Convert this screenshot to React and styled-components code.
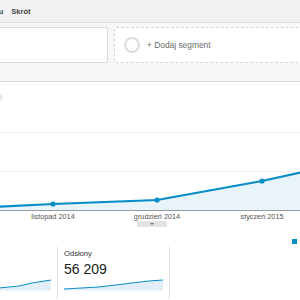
import React from 'react';
import styled, { createGlobalStyle } from 'styled-components';

const GlobalStyle = createGlobalStyle`
  html, body {
    margin: 0;
    padding: 0;
  }
  body {
    width: 300px;
    height: 300px;
    overflow: hidden;
    background: #fff;
    font-family: "Liberation Sans", Arial, sans-serif;
  }
`;

const TopBar = styled.div`
  height: 22px;
  background: #f2f2f2;
  border-bottom: 1px solid #dcdcdc;
  display: flex;
  align-items: center;
  gap: 8px;
  margin-left: -55px;
  white-space: nowrap;
`;

const NavItem = styled.span`
  font-size: 7.5px;
  font-weight: bold;
  color: #444;
`;

const SegmentArea = styled.div`
  height: 59px;
  box-sizing: border-box;
  padding-top: 4px;
  background: #f7f7f7;
  border-bottom: 1px solid #dcdcdc;
  overflow: hidden;
`;

const SegmentRow = styled.div`
  display: flex;
  gap: 6px;
  margin-left: -100px;
  margin-right: -20px;
`;

const SegmentBox = styled.div`
  flex: ${(p) => (p.$grow ? '1 1 auto' : '0 0 208px')};
  height: 36px;
  box-sizing: border-box;
  background: #fff;
  border: 1px ${(p) => (p.$dashed ? 'dashed #d4d4d4' : 'solid #dadada')};
  border-radius: 2px;
  display: flex;
  align-items: center;
  gap: 7px;
  padding-left: 9px;
`;

const Ring = styled.div`
  width: 16px;
  height: 16px;
  box-sizing: border-box;
  border: 2px solid #dcdcdc;
  border-radius: 50%;
`;

const AddText = styled.span`
  font-size: 8.4px;
  color: #6a6a6a;
`;

const ChartSection = styled.div`
  display: flex;
  flex-direction: column;
`;

const ChartToolbar = styled.div`
  height: 17px;
  display: flex;
  align-items: flex-end;
`;

const Toggle = styled.div`
  width: 6px;
  height: 7px;
  margin-left: -3px;
  margin-bottom: -2px;
  border-radius: 50%;
  background: #e3eaed;
`;

const ChartSvg = styled.svg`
  display: block;
  width: 300px;
  height: 122px;
`;

const DrawerRow = styled.div`
  height: 6px;
  display: flex;
  justify-content: center;
  padding-left: 4px;
`;

const DrawerTab = styled.div`
  width: 30px;
  height: 6px;
  background: #e2e2e2;
  display: flex;
  align-items: center;
  justify-content: center;

  &::after {
    content: '';
    border-left: 2px solid transparent;
    border-right: 2px solid transparent;
    border-top: 2px solid #777;
  }
`;

const LegendRow = styled.div`
  height: 20px;
  box-sizing: border-box;
  padding-top: 12px;
  padding-left: 292px;
  display: flex;
`;

const LegendSwatch = styled.div`
  width: 5px;
  height: 5px;
  flex: 0 0 5px;
  background: #058dc7;
`;

const CardsRow = styled.div`
  display: flex;
  margin-left: -54px;
`;

const Card = styled.div`
  width: 112px;
  flex: 0 0 112px;
  height: 52px;
  box-sizing: border-box;
  padding: 2px 4px 0 6px;
  border-right: 1px solid #dcdcdc;
`;

const CardLabel = styled.div`
  height: 9px;
  font-size: 7.6px;
  line-height: 9px;
  color: #333;
`;

const CardValue = styled.div`
  height: 14px;
  font-size: 14px;
  line-height: 14px;
  margin-top: 4px;
  color: #222;
`;

const Spark = styled.svg`
  display: block;
  width: 100px;
  height: 15px;
`;

const BLUE = '#058dc7';

const mainPoints = [
  [-52, 110],
  [53, 105],
  [157, 101],
  [262, 82],
  [352, 62],
];

const axisLabels = [
  { x: 53, text: 'listopad 2014' },
  { x: 157, text: 'grudzień 2014' },
  { x: 262, text: 'styczeń 2015' },
];

// first card sits mostly off the left edge, only its sparkline shows
const cards = [
  {
    id: 'sesje',
    points: [[0, 14], [20, 13.5], [47, 12], [67, 10], [80, 7], [99, 4]],
  },
  {
    id: 'odslony',
    label: 'Odsłony',
    value: '56 209',
    points: [[0, 13], [35, 11], [68, 7], [85, 5], [99, 4]],
  },
];

const toPath = (pts) => pts.map(([x, y], i) => `${i ? 'L' : 'M'}${x} ${y}`).join(' ');

const Sparkline = ({ points }) => {
  const line = toPath(points);
  const last = points[points.length - 1];
  return (
    <Spark viewBox="0 0 100 15">
      <path d={`${line} L${last[0]} 14.5 L${points[0][0]} 14.5 Z`} fill="#e3eef8" />
      <path d={line} fill="none" stroke={BLUE} strokeWidth="1" />
    </Spark>
  );
};

const MainChart = () => {
  const line = toPath(mainPoints);
  return (
    <ChartSvg viewBox="0 0 300 122">
      <line x1="0" x2="300" y1="33.5" y2="33.5" stroke="#f0f0f0" />
      <line x1="0" x2="300" y1="72.5" y2="72.5" stroke="#f0f0f0" />
      <path d={`${line} L352 111 L-52 111 Z`} fill="#e8f3fa" />
      <path d={line} fill="none" stroke={BLUE} strokeWidth="2.2" strokeLinejoin="round" />
      {mainPoints.slice(1, 4).map(([x, y]) => (
        <circle key={x} cx={x} cy={y} r="2.6" fill={BLUE} />
      ))}
      <line x1="0" x2="300" y1="111.5" y2="111.5" stroke="#9a9a9a" />
      {axisLabels.map((l) => (
        <text
          key={l.text}
          x={l.x}
          y="120"
          textAnchor="middle"
          fontSize="7.3"
          fill="#555"
          fontFamily='"Liberation Sans", Arial, sans-serif'
        >
          {l.text}
        </text>
      ))}
    </ChartSvg>
  );
};

export default function App() {
  return (
    <>
      <GlobalStyle />
      <TopBar>
        <NavItem>Dodaj do panelu</NavItem>
        <NavItem>Skrót</NavItem>
      </TopBar>
      <SegmentArea>
        <SegmentRow>
          <SegmentBox />
          <SegmentBox $dashed $grow>
            <Ring />
            <AddText>+ Dodaj segment</AddText>
          </SegmentBox>
        </SegmentRow>
      </SegmentArea>
      <ChartSection>
        <ChartToolbar>
          <Toggle />
        </ChartToolbar>
        <MainChart />
        <DrawerRow>
          <DrawerTab />
        </DrawerRow>
        <LegendRow>
          <LegendSwatch />
        </LegendRow>
        <CardsRow>
          {cards.map((c) => (
            <Card key={c.id}>
              <CardLabel>{c.label}</CardLabel>
              <CardValue>{c.value}</CardValue>
              <Sparkline points={c.points} />
            </Card>
          ))}
        </CardsRow>
      </ChartSection>
    </>
  );
}
